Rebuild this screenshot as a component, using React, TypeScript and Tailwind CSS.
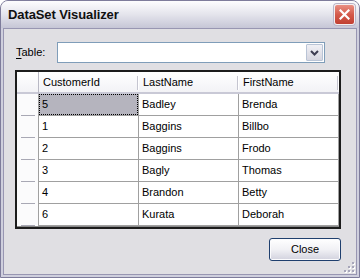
import React from "react";

const columns = ["CustomerId", "LastName", "FirstName"];

const rows = [
  ["5", "Badley", "Brenda"],
  ["1", "Baggins", "Billbo"],
  ["2", "Baggins", "Frodo"],
  ["3", "Bagly", "Thomas"],
  ["4", "Brandon", "Betty"],
  ["6", "Kurata", "Deborah"],
];

function CloseGlyph() {
  return (
    <svg width="11" height="11" viewBox="0 0 11 11" aria-hidden="true">
      <path d="M1.5 1.5 L9.5 9.5 M9.5 1.5 L1.5 9.5" stroke="#fff" strokeWidth="2.2" strokeLinecap="square" />
    </svg>
  );
}

function Chevron() {
  return (
    <svg width="9" height="6" viewBox="0 0 9 6" aria-hidden="true">
      <path d="M1 1 L4.5 4.5 L8 1" fill="none" stroke="#3d3d52" strokeWidth="2" />
    </svg>
  );
}

function Grip() {
  const dots = [
    [8, 0],
    [4, 4],
    [8, 4],
    [0, 8],
    [4, 8],
    [8, 8],
  ];
  return (
    <svg width="11" height="11" viewBox="0 0 11 11" aria-hidden="true">
      {dots.map(([x, y]) => (
        <g key={`${x}-${y}`}>
          <rect x={x + 1} y={y + 1} width="2" height="2" fill="#ffffff" />
          <rect x={x} y={y} width="2" height="2" fill="#a7a6ba" />
        </g>
      ))}
    </svg>
  );
}

export default function App() {
  return (
    <div
      className="flex h-[278px] w-[360px] flex-col overflow-hidden rounded-t-[8px] border border-[#7e7c9b] bg-[#cfcfdd] text-[11px] text-black"
      style={{ fontFamily: '"Liberation Sans", Arial, sans-serif' }}
    >
      {/* title bar */}
      <div className="flex h-[27px] shrink-0 items-center justify-between bg-gradient-to-b from-[#fdfdfe] via-[#e4e4ec] to-[#c6c6d6] pl-[7px] pr-[4px]">
        <span className="text-[13px] font-bold tracking-[-0.1px] text-[#101010]">
          DataSet Visualizer
        </span>
        <button
          type="button"
          className="flex h-[21px] w-[21px] items-center justify-center rounded-[3px] border border-[#f4eef0] bg-gradient-to-b from-[#e98f82] via-[#d45a4b] to-[#c13f31] shadow-[0_0_0_1px_#b9b4c6]"
        >
          <CloseGlyph />
        </button>
      </div>

      {/* client */}
      <div className="relative mx-[2px] mb-[2px] flex flex-1 flex-col border border-[#9896b2] bg-[#e0dfe3] pl-[11px] pr-[13px] pt-[13px]">
        <div className="flex h-[21px] items-center">
          <span className="ml-[1px] w-[41px]">
            <span className="underline underline-offset-2">T</span>able:
          </span>
          <div className="flex h-[21px] w-[268px] items-stretch border border-[#7f9db9] bg-white p-[1px]">
            <div className="flex-1" />
            <div className="flex w-[17px] items-center justify-center rounded-[1px] border border-[#b9c4d6] bg-gradient-to-b from-[#f0f0f5] to-[#d6d6e0]">
              <Chevron />
            </div>
          </div>
        </div>

        {/* data grid */}
        <div className="mt-[7px] h-[159px] w-[326px] border-2 border-[#1c1c1c] bg-[#8a8a8a]">
          <div className="flex h-[22px] bg-gradient-to-b from-white to-[#f1f1f5] shadow-[inset_0_-2px_0_#c9c9d6]">
            <div className="w-[22px] border-r border-[#b8b8c4]" />
            {columns.map((c) => (
              <div key={c} className="relative flex w-[100px] items-center pb-[2px] pl-[4px]">
                {c}
                <span className="absolute right-[1px] top-[4px] h-[14px] w-[1px] bg-[#c5c5d0]" />
                <span className="absolute right-0 top-[4px] h-[14px] w-[1px] bg-white" />
              </div>
            ))}
          </div>
          {rows.map((r, i) => (
            <div key={i} className="flex h-[22px]">
              <div className="relative w-[22px] border-r border-[#a0a0a0] bg-[#fbfbfc]">
                <span className="absolute bottom-0 left-[4px] h-[1px] w-[14px] bg-[#a8a8b4]" />
              </div>
              {r.map((v, j) => (
                <div
                  key={j}
                  className={`flex w-[100px] items-center border-b border-r border-[#a0a0a0] ${
                    i === 0 && j === 0 ? "bg-[#b5b4be]" : "bg-white"
                  }`}
                >
                  {i === 0 && j === 0 ? (
                    <div className="flex h-full w-full items-center border border-dotted border-black pl-[2px]">
                      {v}
                    </div>
                  ) : (
                    <span className="pl-[3px]">{v}</span>
                  )}
                </div>
              ))}
            </div>
          ))}
        </div>

        <div className="mt-[9px] flex w-[326px] justify-end">
          <button
            type="button"
            className="h-[23px] w-[72px] rounded-[3px] border border-[#1f3f6e] bg-gradient-to-b from-white via-[#f1f1f5] to-[#d2d2de] text-[11px] shadow-[inset_0_0_0_1px_#fbfbfd]"
          >
            Close
          </button>
        </div>

        <div className="absolute bottom-[1px] right-[1px]">
          <Grip />
        </div>
      </div>
    </div>
  );
}
